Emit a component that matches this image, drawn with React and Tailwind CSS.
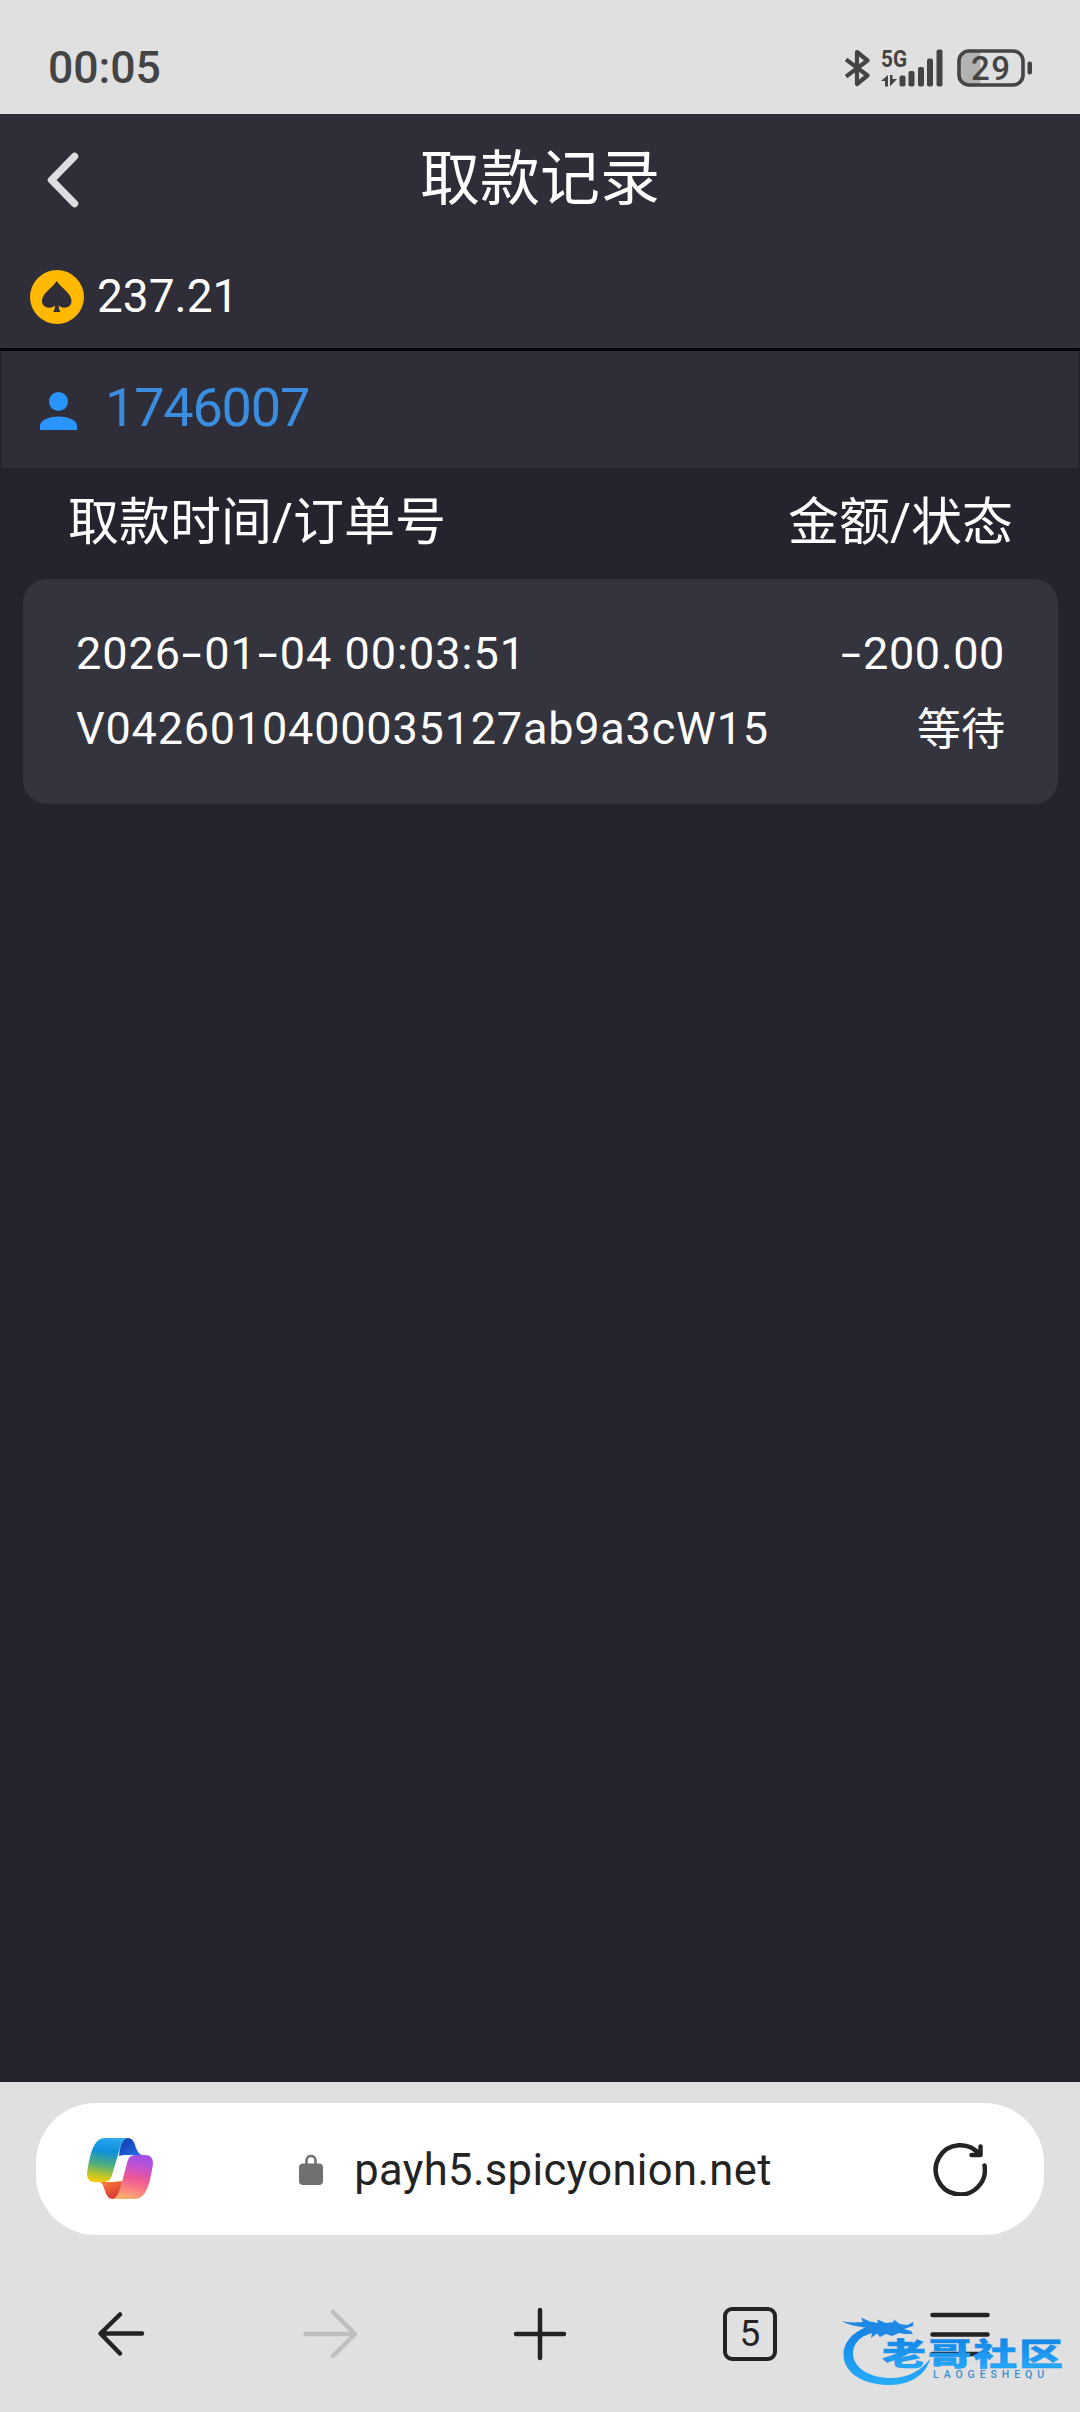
import { Fragment } from 'react';

const records = [
  { time: '2026-01-04 00:03:51', orderNo: 'V0426010400035127ab9a3cW15', amount: '-200.00', status: '等待' },
];

// 加宽的连字符
const Dashed = ({ text }) => text.split('-').map((part, i) => (
  <Fragment key={i}>
    {i > 0 && <span className="inline-block w-[23px] text-center scale-x-[1.6]">-</span>}
    {part}
  </Fragment>
));

const StatusBar = () => (
  <div className="h-[114px] pt-[22px] pl-12 pr-[47px] flex items-center justify-between bg-[#e0e0e0] text-[#444444]">
    <span className="text-[44.5px] leading-none font-medium">00:05</span>
    <div className="flex items-center">
      <svg width="26" height="38" viewBox="0 0 26 38" fill="none" stroke="#444444" strokeWidth="4.200" strokeLinejoin="round">
        <path d="M1 10.500 L22.500 26.500 L12 35 V3 L22.500 11.500 L1 27.500" />
      </svg>
      <svg className="ml-[10px]" width="62" height="54" viewBox="0 -8 62 54" fill="#444444">
        <text x="0" y="18" fontSize="24" fontWeight="700" textLength="26" lengthAdjust="spacingAndGlyphs">5G</text>
        <path d="M0 32 L7 26 V37.500 H4 V32 Z M9 26 H11.500 V30 H16 L9 37.500 Z" />
        <rect x="18.500" y="26.500" width="6" height="11" rx="2" />
        <rect x="27.500" y="22" width="6" height="15.500" rx="2" />
        <rect x="37" y="18" width="6" height="19.500" rx="2" />
        <rect x="46" y="9.500" width="6" height="28" rx="2" />
        <rect x="55.500" y="0.500" width="6" height="37" rx="2" />
      </svg>
      <svg className="ml-[14px]" width="76" height="38" viewBox="0 0 76 38">
        <path d="M12 2 H23.500 V36 H12 Q2 36 2 26 V12 Q2 2 12 2 Z" fill="#b2b2b2" />
        <rect x="2" y="2" width="64" height="34" rx="10" fill="none" stroke="#444444" strokeWidth="3.600" />
        <rect x="70.500" y="12.500" width="4.500" height="13" rx="2" fill="#444444" />
        <text x="14" y="30.500" fontSize="33" fontWeight="500" fill="#444444" textLength="39">29</text>
      </svg>
    </div>
  </div>
);

const TopBar = () => (
  <div className="grid grid-cols-3 items-center h-[127px] pt-1 pl-[47px] pr-[47px]">
    <svg width="32" height="56" viewBox="0 0 32 56" fill="none" stroke="#dedee2" strokeWidth="7.500" strokeLinecap="round" strokeLinejoin="round">
      <path d="M27.500 4.500 L4.500 28 L27.500 51.500" />
    </svg>
    <h1 className="text-[60px] leading-none text-center whitespace-nowrap">取款记录</h1>
  </div>
);

const SpadeCoin = () => (
  <svg width="54" height="54" viewBox="0 0 54 54">
    <circle cx="27" cy="27" r="27" fill="#ffb900" />
    <path d="M26.800 11 C31 18 41.500 23 41.500 31 C41.500 38 33 39.500 28.800 35.500 C28.500 38 29.500 40.500 30.500 42 H23 C24.200 40.500 25.200 38 24.800 35.500 C20.500 39.500 12 38 12 31 C12 23 22.500 18 26.800 11 Z" fill="#2f2d38" />
  </svg>
);

const RecordCard = ({ record }) => (
  <div className="ml-[23px] mr-[22px] h-[225px] pt-[37px] pl-[53px] pr-[53px] rounded-[24px] bg-[#34343f] text-[45px] leading-[75px]">
    <div className="flex justify-between">
      <span className="tracking-[1px]"><Dashed text={record.time} /></span>
      <span className="tracking-[0.6px]"><Dashed text={record.amount} /></span>
    </div>
    <div className="flex justify-between">
      <span className="tracking-[0.8px]">{record.orderNo}</span>
      <span className="pt-[2px] text-[44px]">{record.status}</span>
    </div>
  </div>
);

const CopilotLogo = () => (
  <svg width="66" height="62" viewBox="0 0 66 62">
    <defs>
      <linearGradient id="cpLeft" x1="0.55" y1="0" x2="0.4" y2="1">
        <stop offset="0" stopColor="#2aa9ee" />
        <stop offset="0.3" stopColor="#0f8fdc" />
        <stop offset="0.62" stopColor="#4fae7c" />
        <stop offset="0.85" stopColor="#b8c62c" />
        <stop offset="1" stopColor="#f3cb0e" />
      </linearGradient>
      <linearGradient id="cpTop" x1="0" y1="0" x2="1" y2="1">
        <stop offset="0" stopColor="#1233a8" />
        <stop offset="1" stopColor="#2277ee" />
      </linearGradient>
      <linearGradient id="cpRight" x1="0.6" y1="0" x2="0.4" y2="1">
        <stop offset="0" stopColor="#a44ee6" />
        <stop offset="0.2" stopColor="#b953d8" />
        <stop offset="0.52" stopColor="#ee5795" />
        <stop offset="0.8" stopColor="#fa8581" />
        <stop offset="1" stopColor="#ffb06a" />
      </linearGradient>
      <linearGradient id="cpBottom" x1="0" y1="0" x2="0.5" y2="1">
        <stop offset="0" stopColor="#ff8436" />
        <stop offset="1" stopColor="#d83a38" />
      </linearGradient>
    </defs>
    <path d="M32 18 C33 6 36 0 41 0 C50 0 47 16 56 17 L38 17 C35 17 33 18 32 18 Z" fill="url(#cpTop)" />
    <path d="M12 44 C19 44 16 61 26 61 C31 61 34 52 35 43 L26 44 Z" fill="url(#cpBottom)" />
    <path d="M18 0 H41 C36 0 33.500 8 31 17 L25 37 C23.500 42 21 44 16 44 H8 C1 44 -1 39 0.500 32 C3 18 6 0 18 0 Z" fill="url(#cpLeft)" />
    <path d="M48 61 H25 C30 61 32.500 53 35 44 L40 25 C41.500 19 44 17 49 17 H58 C65 17 67 22 65.500 29 C63 43 60 61 48 61 Z" fill="url(#cpRight)" />
  </svg>
);

const AddressBar = () => (
  <div className="mx-9 h-[132px] pl-[51px] pr-[57px] flex items-center justify-between rounded-[60px] bg-white">
    <CopilotLogo />
    <div className="flex items-center gap-[31px] mr-[15px]">
      <svg width="24" height="31" viewBox="0 0 24 31">
        <path d="M7.500 12 V6.500 C7.500 0.500 16.500 0.500 16.500 6.500 V12" fill="none" stroke="#707070" strokeWidth="2.600" />
        <rect y="9.500" width="24" height="21.500" rx="4" fill="#707070" />
      </svg>
      <span className="pt-[3px] text-[43.5px] leading-none tracking-[0.4px] text-[#232323]">payh5.spicyonion.net</span>
    </div>
    <svg width="54" height="54" viewBox="0 0 54 54" fill="none" stroke="#232323" strokeWidth="4.500" strokeLinecap="round" strokeLinejoin="round">
      <path d="M51.500 23.500 A24.600 24.600 0 1 1 46.500 12.500" />
      <path d="M47.500 4.500 V13 H38.500" />
    </svg>
  </div>
);

// 浮在菜单按钮上的社区标识
const CommunityMark = () => (
  <svg className="absolute left-[842px] top-[2316px]" width="222" height="72" viewBox="0 0 222 72">
    <defs>
      <linearGradient id="markFill" x1="0" y1="0" x2="0" y2="1">
        <stop offset="0" stopColor="#1282e4" />
        <stop offset="1" stopColor="#27adfa" />
      </linearGradient>
    </defs>
    <path d="M24 11 C10 17 1 27 1.500 39 C2 58 23 69.500 49 69 C68 68.500 84 59 88 43 C79 55 65 62 49 62 C28 62 11 52 11 37 C11 28 18 20 31 16 Z" fill="url(#markFill)" />
    <path d="M0 5 C8 7 14 6.500 21 6 L19 1.500 L28 5.500 L36 7 L35 3.500 L44 7 L52 6 L51 3 L58 8 L65 9 L71.500 6 L71 10 L62 13 L69 15 L71 18 L63 18 L57 17 L50 20 L44 18 L38 21 L35 17.500 L29 22 L30 17 L22 20 L24 12 C17 10 8 10 0 5 Z" fill="#1f88e4" />
    <g transform="translate(40 48.500) scale(1 0.690)">
      <text fontSize="44" fontWeight="900" fill="url(#markFill)" stroke="#1c94ee" strokeWidth="0.600" textLength="181">老哥社区</text>
    </g>
    <text x="91" y="62" fontSize="10.500" fontWeight="500" fill="#3a8fd6" textLength="111">LAOGESHEQU</text>
  </svg>
);

const NavBar = () => (
  <div className="grid grid-cols-5 px-[15px] h-[177px] pt-[20px] place-items-center text-[#232323]">
    <svg width="54" height="54" viewBox="0 0 54 54" fill="none" stroke="#232323" strokeWidth="4.500" strokeLinecap="round" strokeLinejoin="round">
      <path d="M49 26.500 H8 M27 7.500 L7.500 26.500 L27 46.500" />
    </svg>
    <svg width="54" height="54" viewBox="0 0 54 54" fill="none" stroke="#bfbfbf" strokeWidth="4.500" strokeLinecap="round" strokeLinejoin="round">
      <path d="M2.500 27 H51 M30 5 L52 27 L30 49" />
    </svg>
    <svg width="54" height="54" viewBox="0 0 54 54" fill="none" stroke="#232323" strokeWidth="4.500" strokeLinecap="round">
      <path d="M27 3 V51 M3 27 H51" />
    </svg>
    <div className="w-[54px] h-[54px] flex items-center justify-center border-4 border-[#232323] rounded-[9px] text-[37px] leading-none">5</div>
    <svg width="60" height="54" viewBox="0 0 60 54" fill="none" stroke="#232323" strokeWidth="4.500" strokeLinecap="round">
      <path d="M2.500 8 H57.500 M2.500 27.500 H57.500 M2.500 47 H57.500" />
    </svg>
  </div>
);

const App = () => (
  <div className="relative w-[1080px] h-[2412px] flex flex-col overflow-hidden bg-[#24242e] text-white font-[Roboto,'Noto_Sans_CJK_SC',sans-serif]">
    <StatusBar />

    {/* 标题与余额 */}
    <div className="h-[237px] bg-[#2e2d38] border-b-[3px] border-black">
      <TopBar />
      <div className="flex items-center gap-[13px] pl-[30px] h-[112px]">
        <SpadeCoin />
        <span className="pb-[3px] text-[46px] leading-none">237.21</span>
      </div>
    </div>

    {/* 账号 */}
    <div className="mx-[2px] h-[117px] pl-[38px] flex items-center bg-[#2e2d38]">
      <svg className="mt-[2px]" width="37" height="38" viewBox="0 0 37 38" fill="#2b95ff">
        <circle cx="18.500" cy="9.500" r="9.500" />
        <path d="M0 38 V33 C3 21.500 34 21.500 37 33 V38 Z" />
      </svg>
      <span className="ml-[28px] pb-1 text-[54px] leading-none tracking-[-1.2px] text-[#3a8ddf]">1746007</span>
    </div>

    {/* 记录列表 */}
    <div className="h-[111px] pb-[2px] pl-[68px] pr-[67px] flex items-center justify-between text-[51px] leading-none">
      <span>取款时间/订单号</span>
      <span>金额/状态</span>
    </div>
    {records.map((r) => <RecordCard key={r.orderNo} record={r} />)}

    {/* 浏览器底栏 */}
    <div className="mt-auto h-[330px] pt-[21px] bg-[#e0e0e0]">
      <AddressBar />
      <NavBar />
    </div>
    <CommunityMark />
  </div>
);

export default App;
